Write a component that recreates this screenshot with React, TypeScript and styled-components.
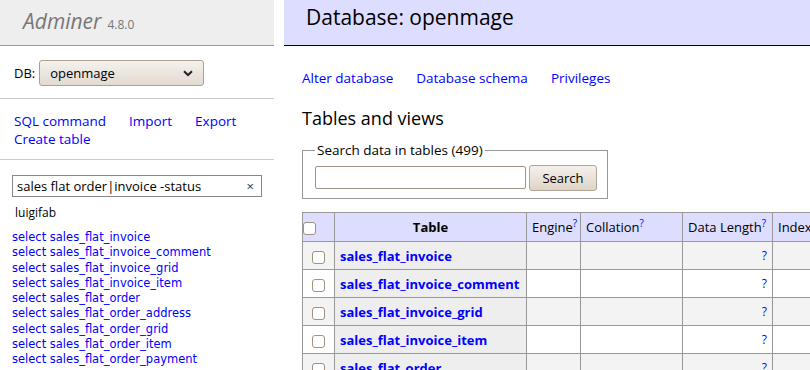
import React from "react";
import styled, { createGlobalStyle } from "styled-components";

const GlobalStyle = createGlobalStyle`
  html, body {
    margin: 0;
    padding: 0;
    background: #fff;
  }
  body {
    font-family: "Open Sans", "DejaVu Sans", sans-serif;
    font-size: 13px;
    color: #000;
  }
  a {
    color: #00f;
    text-decoration: none;
  }
`;

const Page = styled.div`
  display: flex;
  gap: 10px;
  width: 810px;
  height: 370px;
  overflow: hidden;
`;

const Sidebar = styled.div`
  width: 274px;
  flex: none;
`;

const Brand = styled.div`
  height: 46px;
  background: #eee;
  border-bottom: 1px solid #999;
  padding: 7px 0 0 23px;
  display: flex;
  align-items: baseline;
  gap: 6px;
  box-sizing: border-box;
  .name {
    font-size: 21px;
    font-style: italic;
    color: #777;
  }
  .ver {
    font-size: 12px;
    color: #777;
  }
`;

const DbRow = styled.div`
  display: flex;
  align-items: center;
  gap: 4px;
  padding: 14px 14px 12px;
  border-bottom: 1px solid #ccc;
`;

const Select = styled.div`
  width: 165px;
  height: 26px;
  box-sizing: border-box;
  border: 1px solid #ad9f91;
  border-radius: 3px;
  background: linear-gradient(#f5f2ee, #ebe5de 50%, #e3dbd2);
  display: flex;
  align-items: center;
  justify-content: space-between;
  padding: 0 10px;
  font-size: 13px;
`;

const NavLinks = styled.div`
  padding: 13px 14px 11px;
  border-bottom: 1px solid #ccc;
  line-height: 18px;
  display: flex;
  flex-wrap: wrap;
  column-gap: 23px;
  a {
    font-size: 13.5px;
  }
`;

const SearchBox = styled.div`
  margin: 15px 0 0 12px;
  width: 250px;
  height: 22px;
  box-sizing: border-box;
  border: 1px solid #888;
  display: flex;
  align-items: center;
  padding: 0 4px;
  font-size: 13px;
  .q {
    flex: 1;
  }
  .x {
    color: #333;
    font-size: 13px;
    margin-right: 3px;
  }
`;

const User = styled.div`
  padding: 8px 0 0 15px;
  font-size: 12px;
  line-height: 15px;
`;

const TableList = styled.ul`
  list-style: none;
  margin: 10px 0 0;
  padding: 0 0 0 12px;
  li {
    font-family: "DejaVu Sans", sans-serif;
    font-size: 11.5px;
    line-height: 15.25px;
    white-space: nowrap;
  }
`;

const Main = styled.div`
  flex: 1;
  min-width: 0;
`;

const Heading = styled.h2`
  margin: 0;
  height: 46px;
  box-sizing: border-box;
  background: #ddf;
  border-bottom: 1px solid #000;
  font-size: 21px;
  font-weight: normal;
  padding: 2px 0 0 22px;
  line-height: 30px;
`;

const Content = styled.div`
  padding: 0 0 0 18px;
`;

const Actions = styled.p`
  margin: 22px 0 0;
  display: flex;
  gap: 23px;
  font-size: 13.5px;
  line-height: 20px;
`;

const SubHeading = styled.h3`
  margin: 18px 0 0;
  font-size: 18px;
  font-weight: normal;
  line-height: 24px;
`;

const Fieldset = styled.fieldset`
  margin: 11px 0 0;
  width: 306px;
  box-sizing: border-box;
  border: 1px solid #999;
  padding: 6px 10px 7px 12px;
  display: flex;
  gap: 3px;
  align-items: flex-start;
  legend {
    padding: 0 2px;
    font-size: 13.5px;
  }
`;

const TextInput = styled.div`
  margin-top: 1px;
  width: 211px;
  height: 23px;
  box-sizing: border-box;
  border: 1px solid #a39282;
  border-radius: 2px;
  background: #fff;
`;

const Button = styled.div`
  width: 68px;
  height: 26px;
  box-sizing: border-box;
  border: 1px solid #b3a493;
  border-radius: 3px;
  background: linear-gradient(#f4f0eb, #e8e0d7 60%, #ddd3c8);
  display: flex;
  align-items: center;
  justify-content: center;
  font-size: 13px;
`;

const Grid = styled.table`
  margin-top: 13px;
  border-collapse: collapse;
  border: 1px solid #999;
  width: 520px;
  table-layout: fixed;
  font-size: 13px;
  th, td {
    border: 1px solid #999;
    padding: 0 5px;
    height: 28px;
    box-sizing: border-box;
  }
  thead th, thead td {
    background: #ddf;
    height: 29px;
    font-weight: normal;
    text-align: left;
    white-space: nowrap;
  }
  thead th.name {
    font-weight: bold;
    text-align: center;
  }
  tbody th {
    background: #eee;
    text-align: left;
    font-weight: bold;
    white-space: nowrap;
    overflow: hidden;
  }
  sup {
    color: #00f;
    font-size: 10px;
    vertical-align: 5px;
    line-height: 0;
  }
`;

const Row = styled.tr<{ $odd: boolean }>`
  td {
    background: ${(p) => (p.$odd ? "#f3f3f3" : "#fff")};
  }
`;

const CheckCell = styled.td`
  text-align: center;
  padding: 0 !important;
`;

const Check = styled.span`
  display: inline-block;
  width: 13px;
  height: 13px;
  box-sizing: border-box;
  border: 1px solid #a3927f;
  border-radius: 3px;
  background: #fff;
  vertical-align: middle;
`;

const Help = styled.td`
  text-align: right;
  color: #00f;
  font-size: 12px;
`;

const Chevron = () => (
  <svg width="10" height="7" viewBox="0 0 10 7">
    <path d="M1 1.2 L5 5 L9 1.2" fill="none" stroke="#222" strokeWidth="2" />
  </svg>
);

const sideTables = [
  "sales_flat_invoice",
  "sales_flat_invoice_comment",
  "sales_flat_invoice_grid",
  "sales_flat_invoice_item",
  "sales_flat_order",
  "sales_flat_order_address",
  "sales_flat_order_grid",
  "sales_flat_order_item",
  "sales_flat_order_payment",
];

const mainTables = sideTables.slice(0, 5);

export default function App() {
  return (
    <>
      <GlobalStyle />
      <Page>
        <Sidebar>
          <Brand>
            <span className="name">Adminer</span>
            <span className="ver">4.8.0</span>
          </Brand>
          <DbRow>
            <span>DB:</span>
            <Select>
              <span>openmage</span>
              <Chevron />
            </Select>
          </DbRow>
          <NavLinks>
            <a href="#">SQL command</a>
            <a href="#">Import</a>
            <a href="#">Export</a>
            <a href="#">Create table</a>
          </NavLinks>
          <SearchBox>
            <span className="q">sales flat order|invoice -status</span>
            <span className="x">×</span>
          </SearchBox>
          <User>luigifab</User>
          <TableList>
            {sideTables.map((t) => (
              <li key={t}>
                <a href="#">select {t}</a>
              </li>
            ))}
          </TableList>
        </Sidebar>
        <Main>
          <Heading>Database: openmage</Heading>
          <Content>
            <Actions>
              <a href="#">Alter database</a>
              <a href="#">Database schema</a>
              <a href="#">Privileges</a>
            </Actions>
            <SubHeading>Tables and views</SubHeading>
            <Fieldset>
              <legend>Search data in tables (499)</legend>
              <TextInput />
              <Button>Search</Button>
            </Fieldset>
            <Grid>
              <colgroup>
                <col style={{ width: 32 }} />
                <col style={{ width: 192 }} />
                <col style={{ width: 54 }} />
                <col style={{ width: 102 }} />
                <col style={{ width: 90 }} />
                <col style={{ width: 60 }} />
              </colgroup>
              <thead>
                <tr>
                  <CheckCell>
                    <Check />
                  </CheckCell>
                  <th className="name">Table</th>
                  <td>
                    Engine<sup>?</sup>
                  </td>
                  <td>
                    Collation<sup>?</sup>
                  </td>
                  <td>
                    Data Length<sup>?</sup>
                  </td>
                  <td>
                    Index Length<sup>?</sup>
                  </td>
                </tr>
              </thead>
              <tbody>
                {mainTables.map((t, i) => (
                  <Row key={t} $odd={i % 2 === 0}>
                    <CheckCell>
                      <Check />
                    </CheckCell>
                    <th>
                      <a href="#">{t}</a>
                    </th>
                    <td></td>
                    <td></td>
                    <Help>?</Help>
                    <td></td>
                  </Row>
                ))}
              </tbody>
            </Grid>
          </Content>
        </Main>
      </Page>
    </>
  );
}
